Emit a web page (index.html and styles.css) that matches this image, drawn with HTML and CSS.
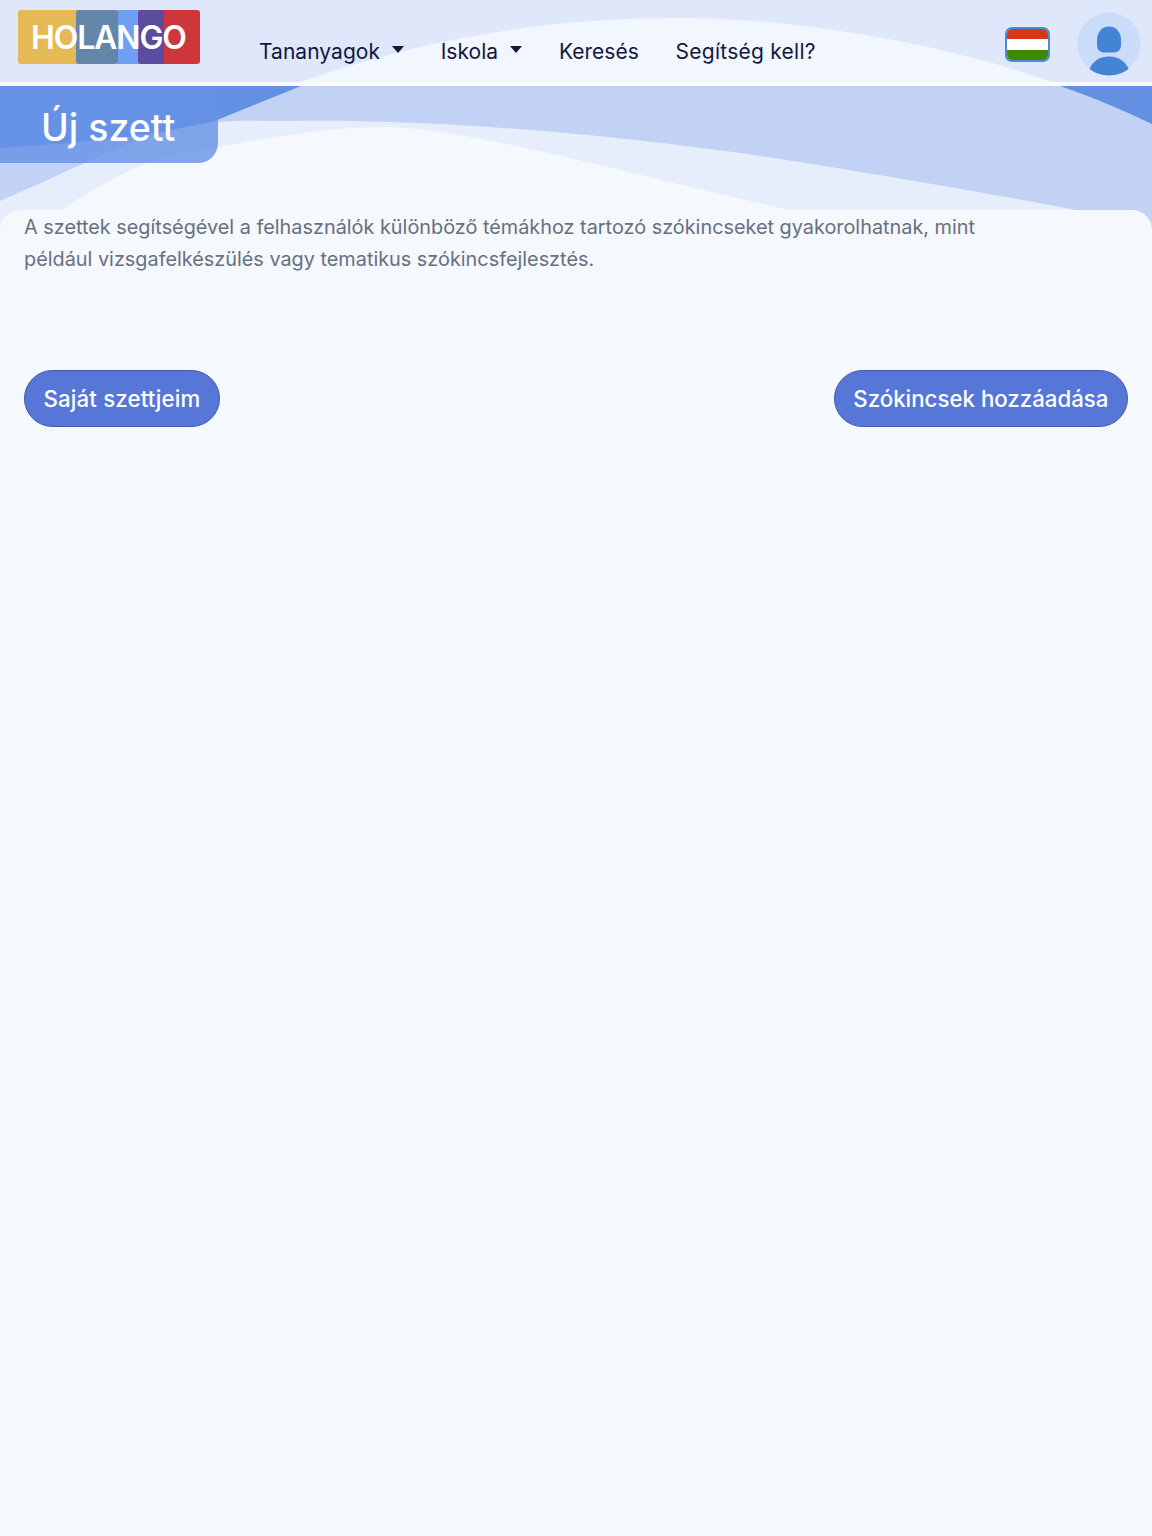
FILE: index.html
```html
<!DOCTYPE html>
<html lang="hu">
<head>
<meta charset="utf-8">
<title>Új szett</title>
<link rel="stylesheet" href="styles.css">
</head>
<body>
<header class="top">
  <svg class="waves" width="1152" height="240" viewBox="0 0 1152 240" aria-hidden="true">
    <rect x="0" y="0" width="1152" height="82" fill="#dfe8fa"/>
    <path d="M300 82 C420 40 540 18 680 18 C800 18 950 45 1052 82 Z" fill="#f2f6fe"/>
    <rect x="0" y="82" width="1152" height="4" fill="#fbfcff"/>
    <rect x="0" y="86" width="1152" height="154" fill="#6490e4"/>
    <path d="M301 86 L1060 86 C1095 98 1125 111 1152 124 L1152 240 L0 240 L0 148 C90 142 165 135 217 120 Z" fill="#c1d2f4"/>
    <path d="M0 201 C30 188 60 174 87 162 C125 143 170 127 217 122 C240 120 265 121 290 121 C400 119 570 128 768 157 C900 178 1000 195 1090 213 L1090 240 L0 240 Z" fill="#e6edfb"/>
    <path d="M62 210 C90 190 118 176 147 162 C170 153 195 150 218 147 C270 137 330 127 384 127 C470 128 620 172 790 210 L790 240 L62 240 Z" fill="#f5f8fd"/>
  </svg>
  <nav class="nav">
    <a class="logo" href="#">
      <span class="logo-tile tile-yellow"></span>
      <span class="logo-tile tile-steel"></span>
      <span class="logo-tile tile-blue"></span>
      <span class="logo-tile tile-purple"></span>
      <span class="logo-tile tile-red"></span>
      <span class="logo-text">HOLANGO</span>
    </a>
    <ul class="links">
      <li class="link caret">Tananyagok</li>
      <li class="link caret">Iskola</li>
      <li class="link">Keresés</li>
      <li class="link link-help">Segítség kell?</li>
    </ul>
    <div class="flag"><span class="red"></span><span class="white"></span><span class="green"></span></div>
    <div class="avatar">
      <svg width="64" height="64" viewBox="0 0 64 64" aria-hidden="true">
        <circle cx="32" cy="32" r="31.5" fill="#cbdcfb"/>
        <path d="M32 14.5 C39.5 14.5 44 20.5 44 28 L44 33 C44 38 41 40.5 36 40.5 L28 40.5 C23 40.5 20 38 20 33 L20 28 C20 20.5 24.5 14.5 32 14.5 Z" fill="#4484d4"/>
        <path d="M12.5 56.8 C16 49 23 44.5 32 44.5 C41 44.5 48 49 51.5 56.8 C46 61.5 39 63.5 32 63.5 C25 63.5 18 61.5 12.5 56.8 Z" fill="#4484d4"/>
      </svg>
    </div>
  </nav>
  <div class="hero"><h1 class="title">Új szett</h1></div>
</header>
<main class="content">
  <p class="lead">A szettek segítségével a felhasználók különböző témákhoz tartozó szókincseket gyakorolhatnak, mint például vizsgafelkészülés vagy tematikus szókincsfejlesztés.</p>
  <div class="actions">
    <a class="btn btn-wide" href="#">Saját szettjeim</a>
    <a class="btn" href="#">Szókincsek hozzáadása</a>
  </div>
</main>
</body>
</html>
```
FILE: styles.css
```css
* { box-sizing: border-box; }
html, body { margin: 0; padding: 0; }
body {
  background: #f5f8fd;
  font-family: Inter, "Liberation Sans", sans-serif;
  min-height: 1536px;
  overflow-x: hidden;
}
.top { position: relative; height: 210px; }
.waves { position: absolute; left: 0; top: 0; display: block; }
.nav {
  position: relative;
  display: flex;
  align-items: flex-start;
  height: 86px;
}
.logo {
  position: relative;
  display: block;
  width: 182px;
  height: 54px;
  margin: 10px 0 0 18px;
  text-decoration: none;
  flex: none;
}
.logo-tile { position: absolute; top: 0; bottom: 0; }
.tile-yellow { left: 0; width: 62px; background: #e5b955; border-radius: 3px 0 0 3px; }
.tile-blue { left: 99px; width: 24px; background: #6f9ef2; }
.tile-red { left: 144px; width: 38px; background: #cd373c; border-radius: 0 3px 3px 0; }
.tile-steel { left: 58px; width: 42px; background: #6286aa; border-radius: 3px; z-index: 1; }
.tile-purple { left: 120px; width: 26px; background: #5c4c9e; border-radius: 3px; z-index: 1; }
.logo-text {
  position: absolute;
  left: 13px;
  top: 8px;
  z-index: 2;
  font-size: 32px;
  line-height: 40px;
  font-weight: 600;
  letter-spacing: -1.15px;
  color: #fff;
  white-space: nowrap;
}
.links {
  display: flex;
  list-style: none;
  gap: 36.7px;
  margin: 38px 0 0 59px;
  padding: 0;
  flex: 1;
}
.link {
  font-size: 21px;
  font-weight: 425;
  line-height: 28px;
  letter-spacing: 0.04px;
  color: #12183e;
  white-space: nowrap;
}
.link-help { letter-spacing: 0.25px; }
.caret::after {
  content: "";
  display: inline-block;
  margin-left: 12px;
  vertical-align: 6px;
  border-top: 7px solid #12183e;
  border-left: 6.5px solid transparent;
  border-right: 6.5px solid transparent;
}
.flag {
  display: flex;
  flex-direction: column;
  width: 45px;
  height: 35px;
  margin-top: 27px;
  border: 2px solid #4a8bd6;
  border-radius: 7px;
  overflow: hidden;
  flex: none;
}
.flag span { flex: 1; }
.flag .red { background: #d93616; }
.flag .white { background: #fff; }
.flag .green { background: #3f8a00; }
.avatar {
  width: 64px;
  height: 64px;
  margin: 11.5px 11.5px 0 26.5px;
  flex: none;
}
.avatar svg { display: block; }
.hero { position: relative; }
.title {
  margin: 0;
  width: 218px;
  height: 77px;
  padding-left: 41px;
  font-size: 37.5px;
  font-weight: 450;
  line-height: 83px;
  color: #fff;
  background: rgba(101, 145, 230, 0.8);
  border-radius: 0 0 20px 0;
  white-space: nowrap;
}
.content {
  position: relative;
  background: #f5f8fd;
  border-radius: 20px 20px 0 0;
  padding: 1px 24px 0;
}
.lead {
  margin: 0;
  max-width: 980px;
  font-size: 19.85px;
  line-height: 32px;
  color: #667180;
}
.actions {
  display: flex;
  justify-content: space-between;
  margin-top: 95px;
}
.btn {
  display: block;
  height: 57px;
  padding: 0 18.5px;
  font-size: 22.25px;
  font-weight: 450;
  line-height: 55px;
  color: #fff;
  background: #5777d8;
  border: 1px solid #3f56ad;
  border-radius: 29px;
  text-decoration: none;
  white-space: nowrap;
}
.btn-wide { letter-spacing: 0.15px; }
```
